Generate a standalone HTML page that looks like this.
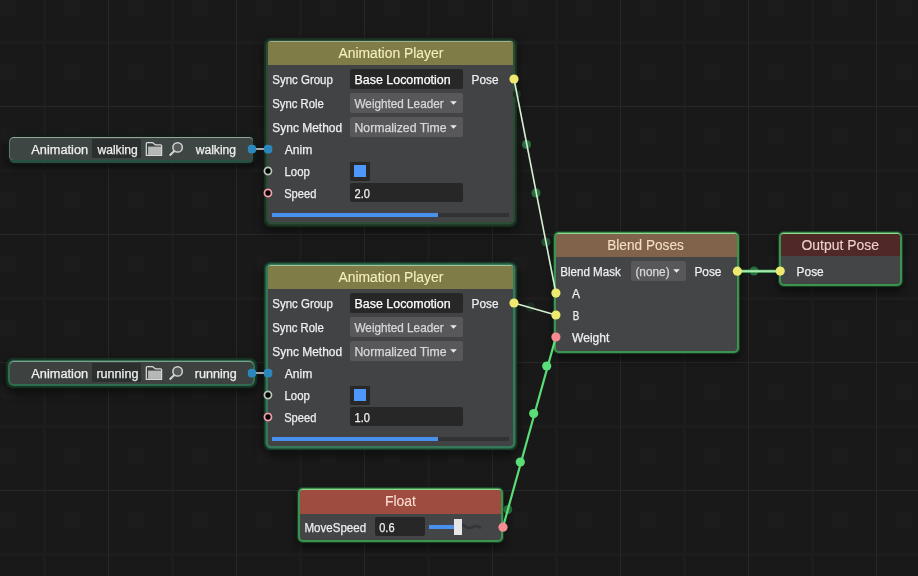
<!DOCTYPE html>
<html>
<head>
<meta charset="utf-8">
<title>Animation Graph</title>
<style>
*{box-sizing:border-box;margin:0;padding:0}
html,body{width:918px;height:576px;overflow:hidden;background:#191919}
body{position:relative;font-family:"Liberation Sans",sans-serif;font-size:12px;color:#efefef}
svg.layer{position:absolute;left:0;top:0;width:918px;height:576px;pointer-events:none}
.node{position:absolute;background:#424345;border-radius:3px}
.node.dim{box-shadow:0 -1px 0 0 #9db18c,0 0 0 2px rgba(46,78,54,.9),0 2.5px 0.5px 0 rgba(52,72,56,.95),0 0.5px 1.5px 3.6px rgba(28,56,37,.9),0 4px 10px 5px rgba(0,0,0,.5)}
.node.mid{box-shadow:0 -1px 0 0 #a3c59a,0 0 0 2.4px #35795a,0 0 1.5px 3.3px rgba(28,78,50,.85),0 4px 10px 5px rgba(0,0,0,.5)}
.node.asset{background:#3e4643;border-radius:4px}
.node.asset.adim{box-shadow:0 -1px 0 0 #93a599,-1px 0 0 0 #64756a,0 3px 1px 0 rgba(42,84,68,.95),0 0 3px 3px rgba(20,32,26,.9),0 5px 8px 3px rgba(0,0,0,.5)}
.node.asset.mid{background:#3d4140;box-shadow:0 -1px 0 0 #7d9f8b,0 0 0 2px #2f6c50,0 0 1.5px 3.2px rgba(24,66,44,.8),0 4px 10px 5px rgba(0,0,0,.5)}
.node.lit{background:#434546;box-shadow:0 -1px 0 0 #98d690,0 0 0 2px #3c9350,0 0 1px 2.6px rgba(28,80,42,.8),0 5px 8px 3px rgba(0,0,0,.5)}
.hd{position:absolute;border-radius:3px 3px 0 0}
.b{position:absolute}
.t{position:absolute;left:0;top:0;white-space:nowrap;line-height:16px;height:16px;font-size:12px;color:#efefef;transform-origin:0 0;-webkit-text-stroke:0.25px}
#tx{position:absolute;left:0;top:0;width:918px;height:576px;will-change:transform}
.in{position:absolute;background:#272728;border-radius:2px}
.dd{position:absolute;background:#58585b;border-radius:2px}
.ic{position:absolute}
.port{position:absolute;width:9px;height:9px;border-radius:50%}
.py{background:#eeea70}
.pp{background:#f48c92}
.pb{background:#2a88bc;border-radius:3.4px;width:8.5px;height:8.5px}
.ring{background:#050505;border:2.2px solid #93a595}
.ringp{background:#050505;border:2.2px solid #f29aa8}
</style>
</head>
<body>
<svg class="layer" width="918" height="576">
<defs><pattern id="mb" width="64" height="64" patternUnits="userSpaceOnUse"><rect x="0.5" y="0.5" width="15" height="15" rx="2" fill="#1c1c1c"/></pattern></defs>
<rect width="918" height="576" fill="url(#mb)"/>
<g stroke="#1d1d1d" stroke-width="3">
<path d="M44.5 0V576M172.5 0V576M300.5 0V576M428.5 0V576M556.5 0V576M684.5 0V576M812.5 0V576"/>
<path d="M0 42.5H918M0 170.5H918M0 298.5H918M0 426.5H918M0 554.5H918"/>
</g>
<g stroke="#272727" stroke-width="1">
<path d="M108.5 0V576M236.5 0V576M364.5 0V576M492.5 0V576M620.5 0V576M748.5 0V576M876.5 0V576"/>
<path d="M0 106.5H918M0 234.5H918M0 362.5H918M0 490.5H918"/>
</g>
</svg>
<div class="node dim" style="left:268px;top:42px;width:245.3px;height:180px"></div>
<div class="hd" style="left:268px;top:42px;width:245.3px;height:23px;background:#807c47"></div>
<div class="in" style="left:350.3px;top:69.4px;width:112.9px;height:19.3px"></div>
<div class="dd" style="left:350.3px;top:93.2px;width:112.9px;height:19.5px"></div>
<div class="dd" style="left:350.3px;top:117.2px;width:112.9px;height:19.5px"></div>
<svg class="ic" style="left:450.3px;top:101.2px" width="8" height="5" viewBox="0 0 8 5"><path d="M0.2 0.3H6.8L3.5 3.7Z" fill="#ececec"/></svg>
<svg class="ic" style="left:450.3px;top:125.2px" width="8" height="5" viewBox="0 0 8 5"><path d="M0.2 0.3H6.8L3.5 3.7Z" fill="#ececec"/></svg>
<div class="in" style="left:350.3px;top:162.3px;width:19.4px;height:18.6px;border-radius:1px;background:#2a2727"></div>
<div class="b" style="left:353.8px;top:164.9px;width:12.4px;height:12.3px;background:#4e97fb"></div>
<div class="in" style="left:350.3px;top:183px;width:112.9px;height:19.4px"></div>
<div class="b" style="left:437px;top:213.2px;width:72.4px;height:3.6px;background:#323234"></div>
<div class="b" style="left:272px;top:212.7px;width:165.5px;height:4.6px;background:#4a90ee"></div>
<div class="node mid" style="left:268px;top:266px;width:245.3px;height:180px"></div>
<div class="hd" style="left:268px;top:266px;width:245.3px;height:23px;background:#807c47"></div>
<div class="in" style="left:350.3px;top:293.4px;width:112.9px;height:19.3px"></div>
<div class="dd" style="left:350.3px;top:317.2px;width:112.9px;height:19.5px"></div>
<div class="dd" style="left:350.3px;top:341.2px;width:112.9px;height:19.5px"></div>
<svg class="ic" style="left:450.3px;top:325.2px" width="8" height="5" viewBox="0 0 8 5"><path d="M0.2 0.3H6.8L3.5 3.7Z" fill="#ececec"/></svg>
<svg class="ic" style="left:450.3px;top:349.2px" width="8" height="5" viewBox="0 0 8 5"><path d="M0.2 0.3H6.8L3.5 3.7Z" fill="#ececec"/></svg>
<div class="in" style="left:350.3px;top:386.3px;width:19.4px;height:18.6px;border-radius:1px;background:#2a2727"></div>
<div class="b" style="left:353.8px;top:388.9px;width:12.4px;height:12.3px;background:#4e97fb"></div>
<div class="in" style="left:350.3px;top:407px;width:112.9px;height:19.4px"></div>
<div class="b" style="left:437px;top:437.2px;width:72.4px;height:3.6px;background:#323234"></div>
<div class="b" style="left:272px;top:436.7px;width:165.5px;height:4.6px;background:#4a90ee"></div>
<div class="node asset adim" style="left:10px;top:138px;width:242.5px;height:21.7px"></div>
<div class="in" style="left:92px;top:138.9px;width:48.8px;height:19.6px;background:#2b302e;border-radius:1px"></div>
<svg class="ic" style="left:140px;top:136px" width="50" height="26" viewBox="140 136 50 26"><path d="M146.3 155.4 V143.6 Q146.3 142.6 147.3 142.6 H152.4 L155.3 144.8 H160.6 Q161.6 144.8 161.6 145.8 V155.4 Z" fill="#3b413f" stroke="#d8d9d8" stroke-width="1.25" stroke-linejoin="round"/><rect x="148.1" y="146.6" width="13" height="8.3" fill="#b6b8b7"/><circle cx="177.6" cy="147.4" r="4.7" fill="rgba(110,116,114,.45)" stroke="#d2d3d2" stroke-width="1.5"/><path d="M174.3 151 L170.2 154.9" stroke="#d2d3d2" stroke-width="2.1" stroke-linecap="round"/></svg>
<div class="node asset mid" style="left:10px;top:362px;width:242.5px;height:21.7px"></div>
<div class="in" style="left:92px;top:362.9px;width:48.8px;height:19.6px;background:#2b302e;border-radius:1px"></div>
<svg class="ic" style="left:140px;top:360px" width="50" height="26" viewBox="140 136 50 26"><path d="M146.3 155.4 V143.6 Q146.3 142.6 147.3 142.6 H152.4 L155.3 144.8 H160.6 Q161.6 144.8 161.6 145.8 V155.4 Z" fill="#3b413f" stroke="#d8d9d8" stroke-width="1.25" stroke-linejoin="round"/><rect x="148.1" y="146.6" width="13" height="8.3" fill="#b6b8b7"/><circle cx="177.6" cy="147.4" r="4.7" fill="rgba(110,116,114,.45)" stroke="#d2d3d2" stroke-width="1.5"/><path d="M174.3 151 L170.2 154.9" stroke="#d2d3d2" stroke-width="2.1" stroke-linecap="round"/></svg>
<div class="node lit" style="left:556.1px;top:234px;width:180.7px;height:116.6px"></div>
<div class="hd" style="left:556.1px;top:234px;width:180.7px;height:23.1px;background:#80634a"></div>
<div class="dd" style="left:630.8px;top:261px;width:55.2px;height:20px"></div>
<svg class="ic" style="left:673.2px;top:269.4px" width="8" height="5" viewBox="0 0 8 5"><path d="M0.2 0.3H6.8L3.5 3.7Z" fill="#ececec"/></svg>
<div class="node lit" style="left:780.5px;top:234px;width:119.2px;height:50.2px"></div>
<div class="hd" style="left:780.5px;top:234px;width:119.2px;height:22.4px;background:#502828"></div>
<div class="node lit" style="left:300.3px;top:490px;width:201px;height:50px"></div>
<div class="hd" style="left:300.3px;top:490px;width:201px;height:23.5px;background:#9e4c40"></div>
<div class="in" style="left:374.7px;top:517px;width:50.1px;height:19.4px"></div>
<svg class="ic" style="left:462px;top:522px" width="20" height="10" viewBox="0 0 20 10"><path d="M0.5 3.4 C3 3.4 4.5 6.2 7.5 6 C10.5 5.8 11.5 3.6 14 4 C16 4.3 16.8 5.6 18 5.6" fill="none" stroke="#343536" stroke-width="2.6" stroke-linecap="round"/></svg>
<div class="b" style="left:429.3px;top:525px;width:25.7px;height:3.5px;background:#4a90ee"></div>
<div class="b" style="left:454.4px;top:518.9px;width:8px;height:16.1px;background:#e6e6e6"></div>
<div id="tx">
<div class="t" style="transform:translate(338.40px,45.00px) scaleX(0.9919);font-size:14px;-webkit-text-stroke:0.1px;color:#f3efbf">Animation Player</div>
<div class="t" style="transform:translate(272.30px,72.00px) scaleX(0.9562)">Sync Group</div>
<div class="t" style="transform:translate(354.50px,72.00px) scaleX(1.0364);color:#ffffff">Base Locomotion</div>
<div class="t" style="transform:translate(471.60px,72.00px) scaleX(0.9827)">Pose</div>
<div class="t" style="transform:translate(272.30px,96.00px) scaleX(0.9433)">Sync Role</div>
<div class="t" style="transform:translate(354.50px,96.00px) scaleX(0.9772);color:#d8d8d8">Weighted Leader</div>
<div class="t" style="transform:translate(272.30px,120.00px) scaleX(0.9962)">Sync Method</div>
<div class="t" style="transform:translate(354.50px,120.00px) scaleX(1.0214);color:#d8d8d8">Normalized Time</div>
<div class="t" style="transform:translate(284.70px,142.00px) scaleX(1.0094)">Anim</div>
<div class="t" style="transform:translate(284.50px,164.00px) scaleX(0.9474)">Loop</div>
<div class="t" style="transform:translate(284.20px,186.00px) scaleX(0.9258)">Speed</div>
<div class="t" style="transform:translate(354.60px,186.00px) scaleX(0.9231)">2.0</div>
<div class="t" style="transform:translate(338.40px,269.00px) scaleX(0.9919);font-size:14px;-webkit-text-stroke:0.1px;color:#f3efbf">Animation Player</div>
<div class="t" style="transform:translate(272.30px,296.00px) scaleX(0.9562)">Sync Group</div>
<div class="t" style="transform:translate(354.50px,296.00px) scaleX(1.0364);color:#ffffff">Base Locomotion</div>
<div class="t" style="transform:translate(471.60px,296.00px) scaleX(0.9827)">Pose</div>
<div class="t" style="transform:translate(272.30px,320.00px) scaleX(0.9433)">Sync Role</div>
<div class="t" style="transform:translate(354.50px,320.00px) scaleX(0.9772);color:#d8d8d8">Weighted Leader</div>
<div class="t" style="transform:translate(272.30px,344.00px) scaleX(0.9962)">Sync Method</div>
<div class="t" style="transform:translate(354.50px,344.00px) scaleX(1.0214);color:#d8d8d8">Normalized Time</div>
<div class="t" style="transform:translate(284.70px,366.00px) scaleX(1.0094)">Anim</div>
<div class="t" style="transform:translate(284.50px,388.00px) scaleX(0.9474)">Loop</div>
<div class="t" style="transform:translate(284.20px,410.00px) scaleX(0.9258)">Speed</div>
<div class="t" style="transform:translate(354.60px,410.00px) scaleX(0.9231)">1.0</div>
<div class="t" style="transform:translate(31.30px,142.00px) scaleX(1.0648)">Animation</div>
<div class="t" style="transform:translate(97.41px,142.00px) scaleX(1.0088)">walking</div>
<div class="t" style="transform:translate(195.71px,142.00px) scaleX(1.0088)">walking</div>
<div class="t" style="transform:translate(31.30px,366.00px) scaleX(1.0648)">Animation</div>
<div class="t" style="transform:translate(96.40px,366.00px) scaleX(1.0494)">running</div>
<div class="t" style="transform:translate(194.70px,366.00px) scaleX(1.0494)">running</div>
<div class="t" style="transform:translate(607.23px,237.00px) scaleX(0.9741);font-size:14px;-webkit-text-stroke:0.1px;color:#f3e0c4">Blend Poses</div>
<div class="t" style="transform:translate(560.30px,264.00px) scaleX(0.9640)">Blend Mask</div>
<div class="t" style="transform:translate(635.40px,264.00px) scaleX(0.9858);color:#d8d8d8">(none)</div>
<div class="t" style="transform:translate(694.40px,264.00px) scaleX(0.9900)">Pose</div>
<div class="t" style="transform:translate(572.00px,286.00px) scaleX(1.0000)">A</div>
<div class="t" style="transform:translate(572.80px,308.00px) scaleX(0.8125)">B</div>
<div class="t" style="transform:translate(572.00px,330.00px) scaleX(1.0054)">Weight</div>
<div class="t" style="transform:translate(801.50px,237.00px) scaleX(0.9943);font-size:14px;-webkit-text-stroke:0.1px;color:#efd0d0">Output Pose</div>
<div class="t" style="transform:translate(796.60px,264.00px) scaleX(0.9900)">Pose</div>
<div class="t" style="transform:translate(385.01px,493.00px) scaleX(0.9922);font-size:14px;-webkit-text-stroke:0.1px;color:#fbdcd2">Float</div>
<div class="t" style="transform:translate(304.50px,520.00px) scaleX(0.9610)">MoveSpeed</div>
<div class="t" style="transform:translate(379.20px,520.00px) scaleX(0.9172)">0.6</div>
</div>
<svg class="layer" width="918" height="576">
  <line x1="256" y1="149" x2="264" y2="149" stroke="#b4babd" stroke-width="1.8"/>
  <line x1="256" y1="373" x2="264" y2="373" stroke="#b4babd" stroke-width="1.8"/>
  <circle cx="516.8" cy="94" r="4" fill="#1c3022"/>
  <circle cx="526.5" cy="144.5" r="4.5" fill="#2b6e3f"/>
  <circle cx="536" cy="193" r="4.5" fill="#2b6e3f"/>
  <circle cx="546" cy="242" r="4.5" fill="#225232"/>
  <circle cx="530.5" cy="307" r="4.5" fill="#1c3022"/>
  <circle cx="754" cy="271" r="4.5" fill="#2a6a3c"/>
  <circle cx="507.8" cy="509.5" r="4.5" fill="#276a3a"/>
  <line x1="514" y1="79" x2="555.9" y2="293" stroke="#d4f0d0" stroke-width="1.6"/>
  <line x1="514" y1="303" x2="555.9" y2="315" stroke="#d4f0d0" stroke-width="1.6"/>
  <line x1="738" y1="271.2" x2="780" y2="271.2" stroke="#56c970" stroke-width="3"/>
  <line x1="738" y1="271.2" x2="780" y2="271.2" stroke="#c4f2c4" stroke-width="1.2"/>
  <line x1="503" y1="527" x2="555.9" y2="337" stroke="#5adf78" stroke-width="2.2"/>
  <circle cx="546.7" cy="366" r="4.6" fill="#5adf78"/>
  <circle cx="533.7" cy="413.5" r="4.6" fill="#5adf78"/>
  <circle cx="520.3" cy="462" r="4.6" fill="#5adf78"/>
</svg>
<svg class="layer" width="918" height="576">
<rect x="247.8" y="144.8" width="8.4" height="8.6" rx="3.6" fill="#2a88bc"/>
<rect x="263.9" y="144.8" width="8.4" height="8.6" rx="3.6" fill="#2a88bc"/>
<rect x="247.8" y="368.8" width="8.4" height="8.6" rx="3.6" fill="#2a88bc"/>
<rect x="263.9" y="368.8" width="8.4" height="8.6" rx="3.6" fill="#2a88bc"/>
<circle cx="268" cy="171" r="5" fill="rgba(0,0,0,.3)"/><circle cx="268" cy="171" r="3.55" fill="#040404" stroke="#b7c7b8" stroke-width="1.8"/>
<circle cx="268" cy="193" r="5" fill="rgba(0,0,0,.3)"/><circle cx="268" cy="193" r="3.55" fill="#040404" stroke="#f2a0ac" stroke-width="1.8"/>
<circle cx="268" cy="395" r="5" fill="rgba(0,0,0,.3)"/><circle cx="268" cy="395" r="3.55" fill="#040404" stroke="#b7c7b8" stroke-width="1.8"/>
<circle cx="268" cy="417" r="5" fill="rgba(0,0,0,.3)"/><circle cx="268" cy="417" r="3.55" fill="#040404" stroke="#f2a0ac" stroke-width="1.8"/>
<circle cx="514" cy="79" r="4.6" fill="#eeea70"/>
<circle cx="514" cy="303" r="4.6" fill="#eeea70"/>
<circle cx="555.9" cy="293.1" r="4.6" fill="#eeea70"/>
<circle cx="555.9" cy="315" r="4.6" fill="#eeea70"/>
<circle cx="555.9" cy="337" r="4.6" fill="#f48c92"/>
<circle cx="737.4" cy="271.2" r="4.6" fill="#eeea70"/>
<circle cx="780.2" cy="271.1" r="4.6" fill="#eeea70"/>
<circle cx="503" cy="527.2" r="4.6" fill="#f48c92"/>
</svg>
</body>
</html>
